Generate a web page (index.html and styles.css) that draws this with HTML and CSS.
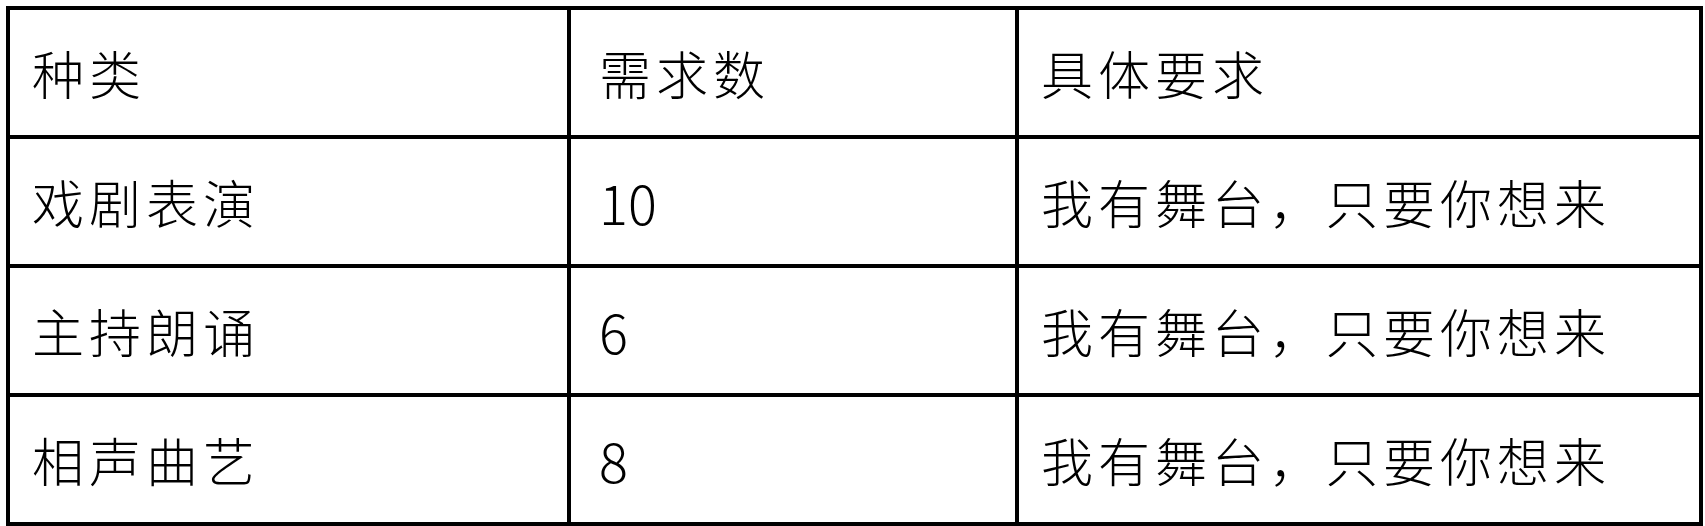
FILE: index.html
```html
<!DOCTYPE html>
<html lang="zh-CN">
<head>
<meta charset="utf-8">
<title>表格</title>
<link rel="stylesheet" href="styles.css">
</head>
<body>
<table class="grid">
  <colgroup>
    <col class="c1">
    <col class="c2">
    <col class="c3">
  </colgroup>
  <tr><td>种类</td><td class="mid">需求数</td><td>具体要求</td></tr>
  <tr><td>戏剧表演</td><td class="mid num">10</td><td>我有舞台，只要你想来</td></tr>
  <tr><td>主持朗诵</td><td class="mid num">6</td><td>我有舞台，只要你想来</td></tr>
  <tr><td>相声曲艺</td><td class="mid num">8</td><td>我有舞台，只要你想来</td></tr>
</table>
</body>
</html>
```
FILE: styles.css
```css
html, body {
  margin: 0;
  padding: 0;
  background: #fff;
}
body {
  padding: 6px 0 0 6px;
}
.grid {
  border-collapse: collapse;
  width: 1693px;
  table-layout: fixed;
  border: 4px solid #000;
  font-family: "Noto Sans CJK SC", "Noto Sans", sans-serif;
  font-weight: 300;
  font-size: 52px;
  letter-spacing: 5px;
  color: #000;
}
.c1 { width: 561px; }
.c2 { width: 448px; }
.c3 { width: 684px; }
.grid td {
  border: 4px solid #000;
  height: 129px;
  padding: 0 0 0 22px;
  box-sizing: border-box;
  vertical-align: middle;
  white-space: nowrap;
  line-height: 1;
}
.grid td.mid {
  padding-left: 28px;
}
.grid td.num {
  letter-spacing: 0;
  font-size: 54px;
}
```
